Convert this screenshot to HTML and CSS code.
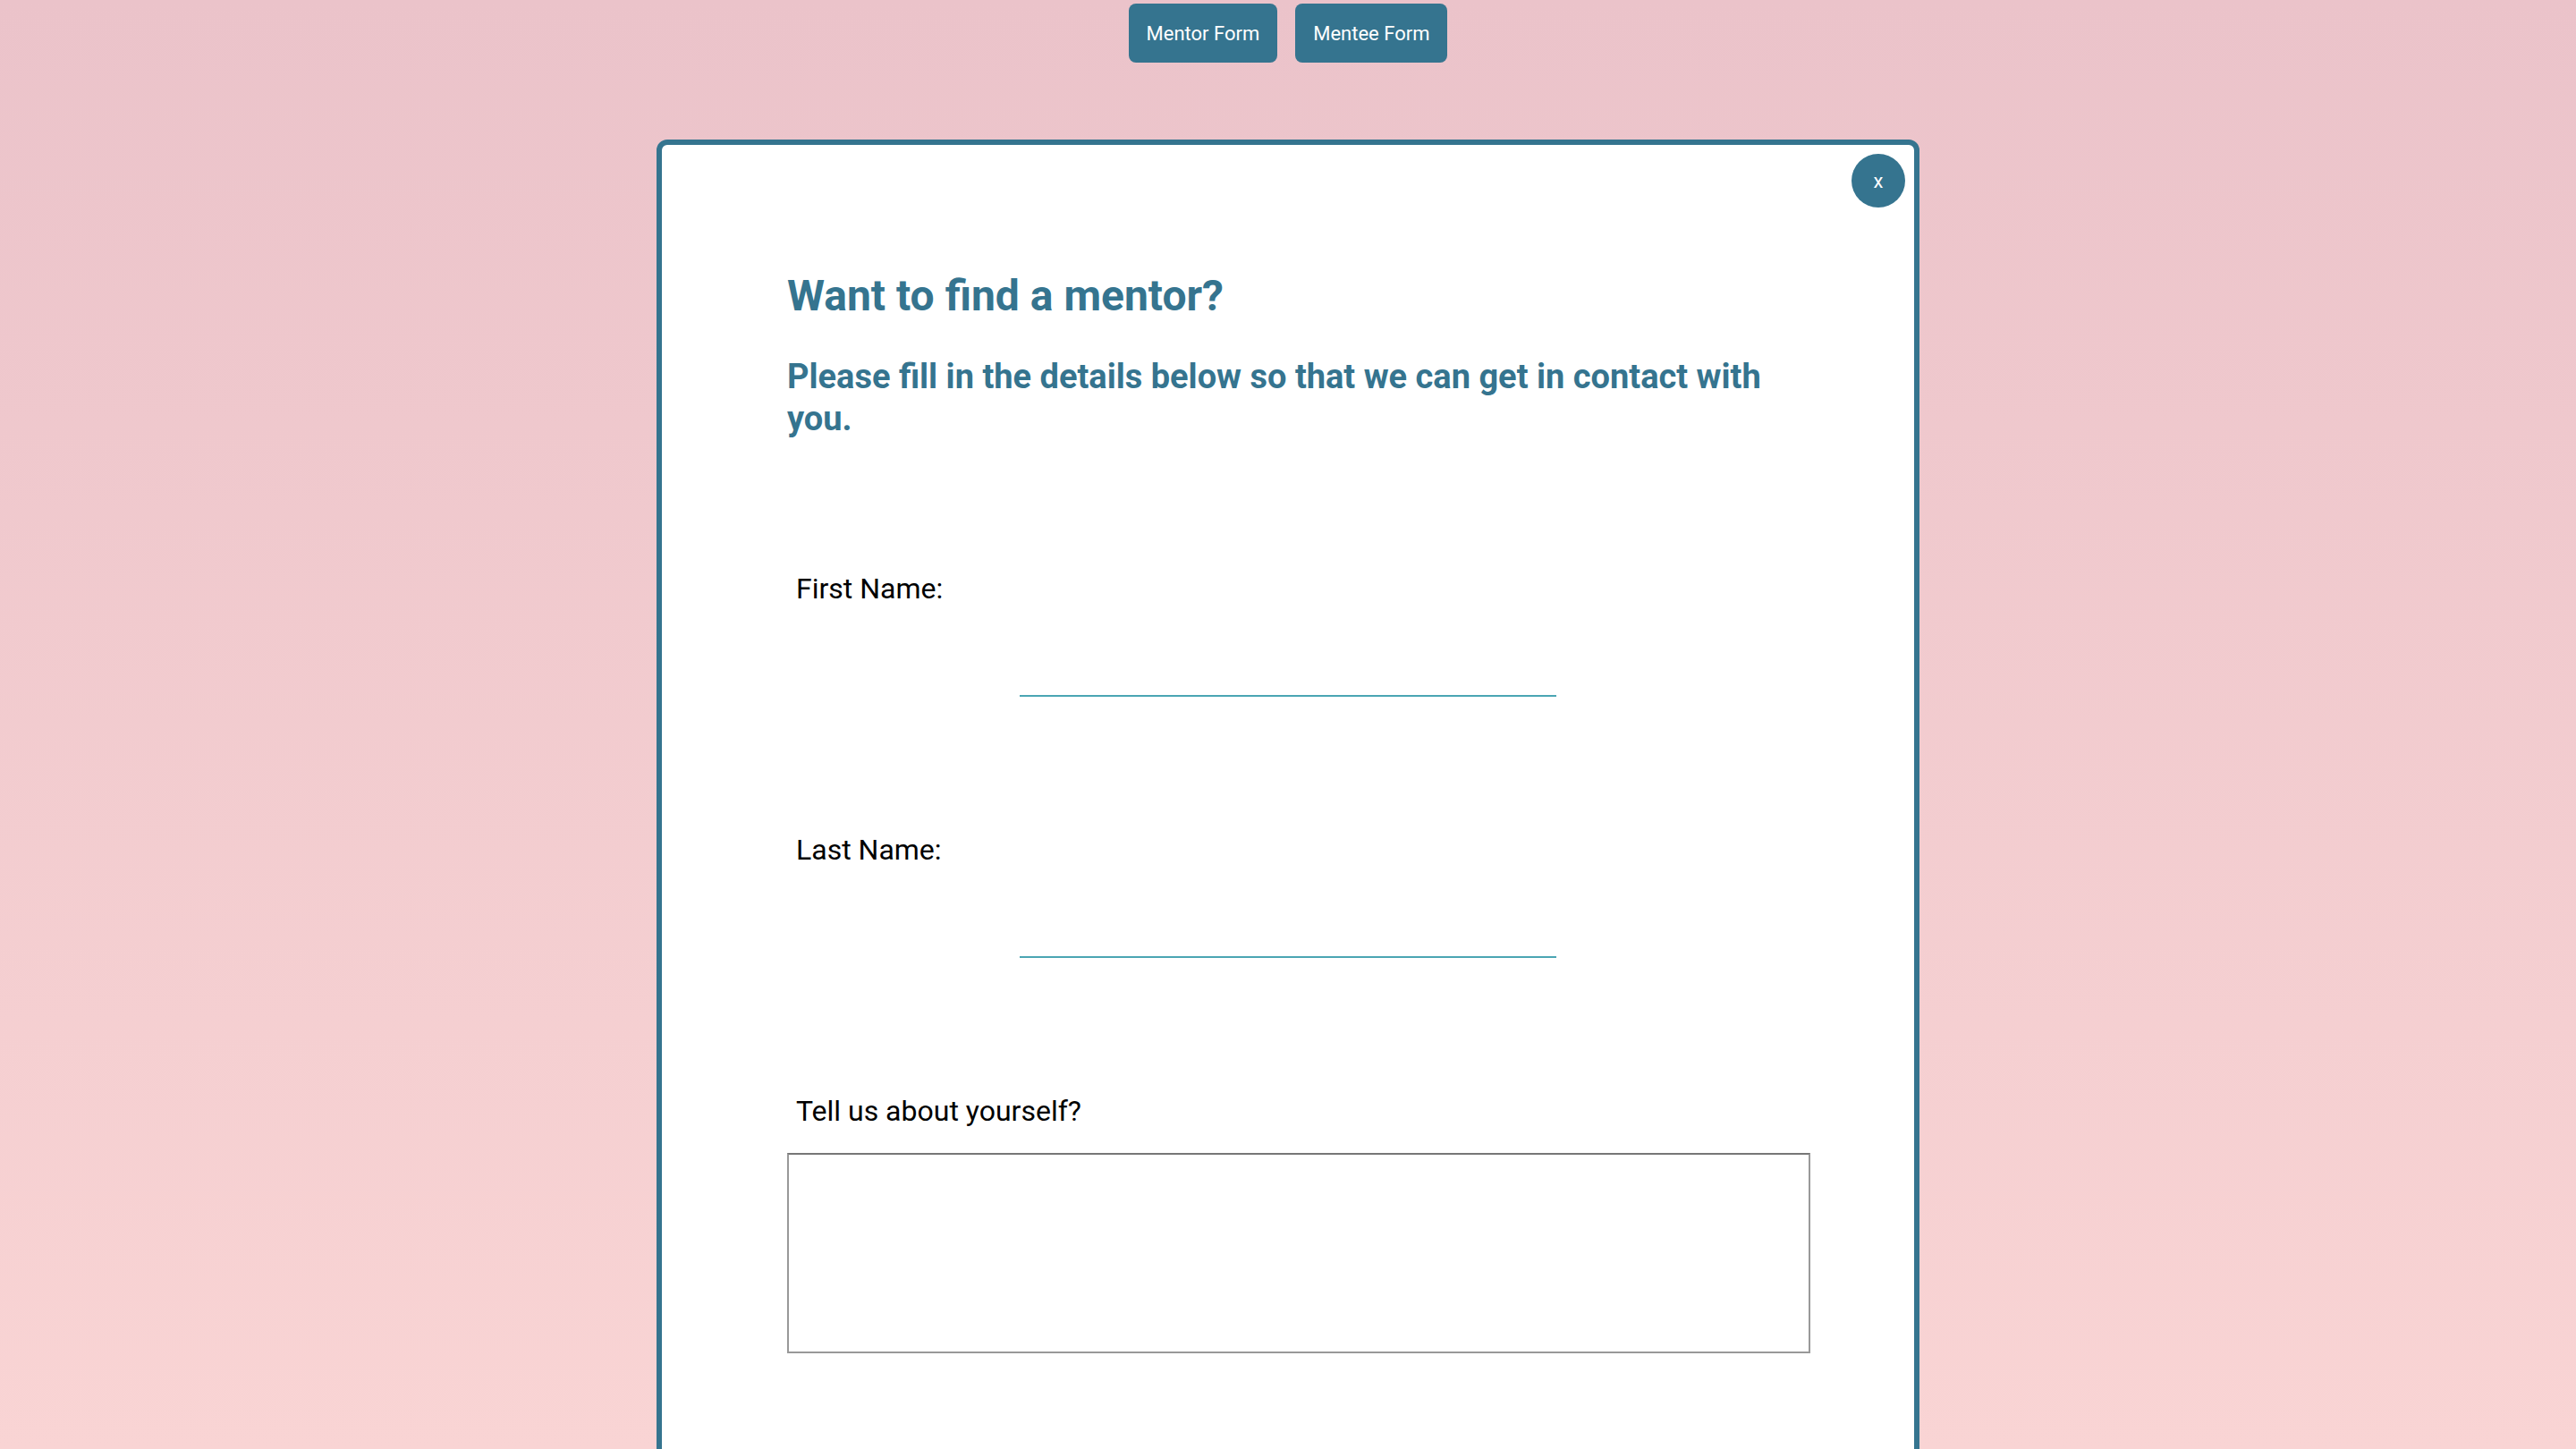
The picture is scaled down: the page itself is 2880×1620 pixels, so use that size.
FILE: index.html
```html
<!DOCTYPE html>
<html lang="en">
<head>
<meta charset="utf-8">
<title>Find a mentor</title>
<link rel="stylesheet" href="styles.css">
</head>
<body>
  <nav class="tabs">
    <button class="tab">Mentor Form</button>
    <button class="tab">Mentee Form</button>
  </nav>
  <main class="modal">
    <button class="close">x</button>
    <h2 class="title">Want to find a mentor?</h2>
    <h3 class="subtitle">Please fill in the details below so that we can get in contact with you.</h3>
    <form class="form">
      <div class="field">
        <label class="label" for="first">First Name:</label>
        <input class="line-input" id="first" type="text">
      </div>
      <div class="field">
        <label class="label" for="last">Last Name:</label>
        <input class="line-input" id="last" type="text">
      </div>
      <div class="field">
        <label class="label" for="about">Tell us about yourself?</label>
        <textarea class="about" id="about"></textarea>
      </div>
    </form>
  </main>
</body>
</html>
```
FILE: styles.css
```css
html, body {
  margin: 0;
  padding: 0;
}
body {
  height: 1620px;
  overflow: hidden;
  font-family: Roboto, "Liberation Sans", sans-serif;
  background: linear-gradient(to bottom, #ebc3ca 0%, #f9d4d4 100%);
}
.tabs {
  display: flex;
  justify-content: center;
  gap: 20px;
  padding-top: 4px;
}
.tab {
  height: 66px;
  padding: 0 20px;
  border: none;
  border-radius: 8px;
  background: #35748f;
  color: #ffffff;
  font-family: Roboto, "Liberation Sans", sans-serif;
  font-size: 22px;
}
.modal {
  position: relative;
  box-sizing: border-box;
  width: 1412px;
  min-height: 1600px;
  margin: 86px auto 0;
  padding: 140px 140px 100px;
  border: 6px solid #35748f;
  border-radius: 12px;
  background: #ffffff;
}
.close {
  position: absolute;
  top: 10px;
  right: 10px;
  width: 60px;
  height: 60px;
  border: none;
  border-radius: 50%;
  background: #35748f;
  color: #ffffff;
  font-family: Roboto, "Liberation Sans", sans-serif;
  font-size: 22px;
  padding: 0;
}
.title {
  margin: 0;
  font-size: 48px;
  font-weight: 700;
  color: #35748f;
}
.subtitle {
  margin: 39px 0 0;
  font-size: 38px;
  line-height: 47px;
  font-weight: 700;
  color: #35748f;
}
.form {
  margin-top: 147px;
}
.field + .field {
  margin-top: 152px;
}
.label {
  display: block;
  padding-left: 10px;
  font-size: 32px;
  color: #000000;
}
.line-input {
  display: block;
  box-sizing: border-box;
  width: 600px;
  height: 50px;
  margin: 52px auto 0;
  border: none;
  border-bottom: 2px solid #4ba5b3;
  background: transparent;
  outline: none;
}
.about {
  display: block;
  width: 100%;
  height: 200px;
  margin-top: 28px;
  padding: 10px;
  border: 2px solid #999999;
  border-top-color: #767676;
  resize: none;
}
```
